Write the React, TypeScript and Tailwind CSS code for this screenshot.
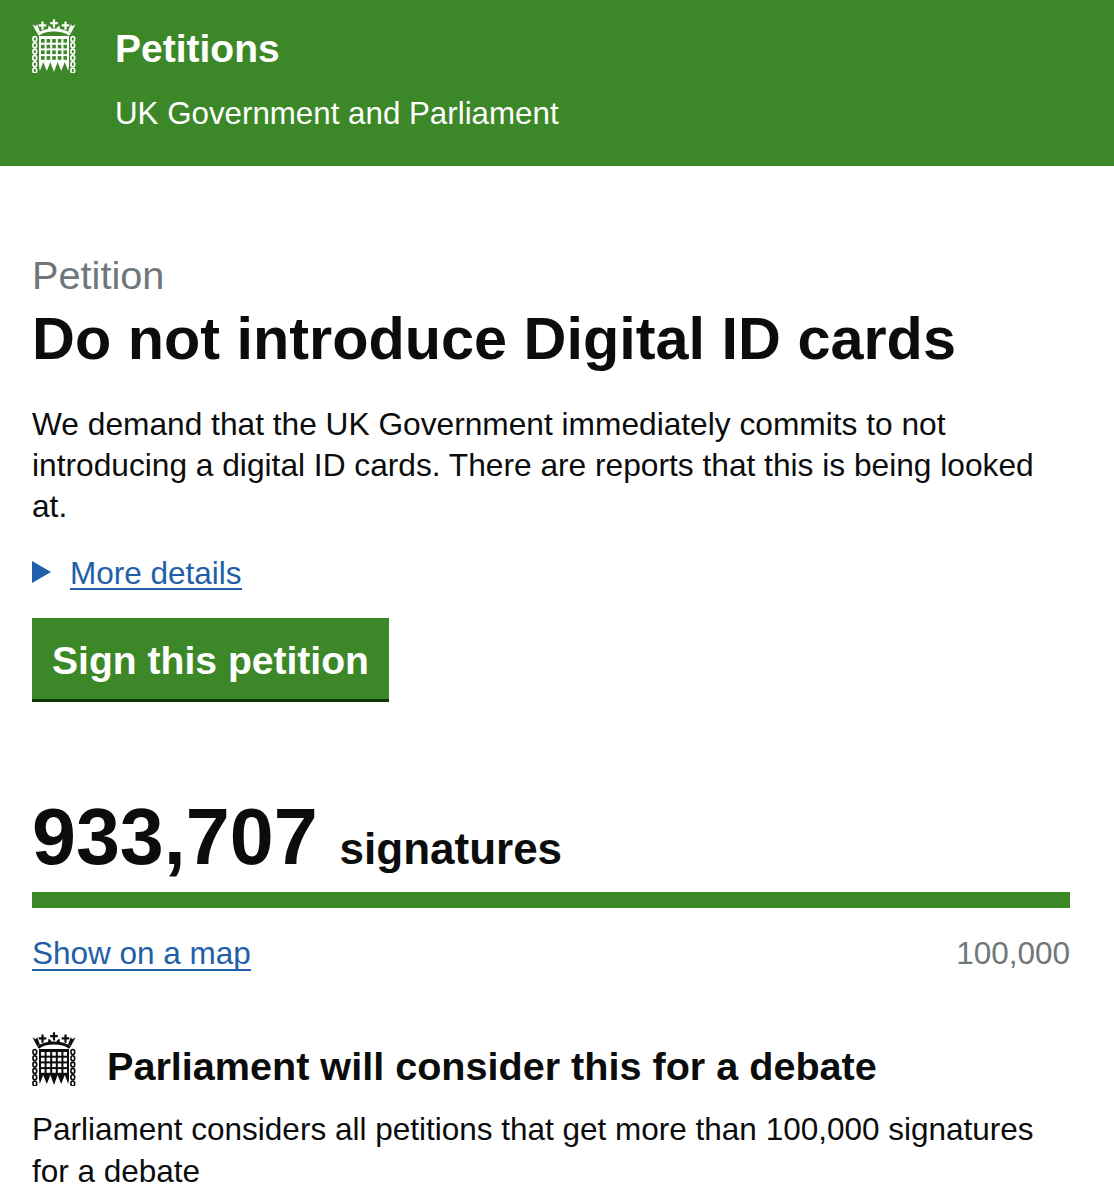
const font = "font-['Liberation_Sans',Arial,sans-serif]";

function Cross({ x, y }: { x: number; y: number }) {
  return <path d={`M${x - 1.1} ${y - 4} H${x + 1.1} V${y - 1.3} H${x + 3.8} V${y + 1} H${x + 1.1} V${y + 4.2} H${x - 1.1} V${y + 1} H${x - 3.8} V${y - 1.3} H${x - 1.1} Z`} />;
}

function Portcullis({ className }: { className: string }) {
  const holes = [];
  for (let r = 0; r < 4; r++) {
    for (let c = 0; c < 5; c++) {
      holes.push(<rect key={`${r}-${c}`} x={9 + c * 5.6} y={20 + r * 5.7} width="3.6" height="3.7" fill="var(--gap)" />);
    }
  }
  const links = [];
  for (let i = 0; i < 6; i++) {
    links.push(<ellipse key={`l${i}`} cx="2.8" cy={20 + i * 6.3} rx="1.9" ry="2.5" fill="none" stroke="currentColor" strokeWidth="1.6" />);
    links.push(<ellipse key={`r${i}`} cx="40.8" cy={20 + i * 6.3} rx="1.9" ry="2.5" fill="none" stroke="currentColor" strokeWidth="1.6" />);
  }
  return (
    <svg viewBox="0 0 44 54" className={className} fill="currentColor">
      {/* crown */}
      <Cross x={22} y={4.2} />
      <Cross x={10.5} y={6.5} />
      <Cross x={33.5} y={6.5} />
      <path d="M0.5 5.5 L4 7.2 L5 5 L8 12.5 L5 14 Z M43.5 5.5 L40 7.2 L39 5 L36 12.5 L39 14 Z" />
      <path d="M16 11 L16.5 6.5 L19 8.5 L20 11 Z M28 11 L27.5 6.5 L25 8.5 L24 11 Z" />
      <path d="M6 15.5 C14 9.5 30 9.5 38 15.5" fill="none" stroke="currentColor" strokeWidth="3" />
      {/* grille */}
      <path d="M7 17 H37 V47 L36.2 52 L32.8 43 L29.2 52 L25.6 43 L22 53 L18.4 43 L14.8 52 L11.2 43 L7.8 52 L7 47 Z" />
      {holes}
      {links}
    </svg>
  );
}

export default function App() {
  return (
    <div className={`${font} w-[1114px] h-[1200px] overflow-hidden bg-white text-[#0b0c0c]`}>
      <header className="h-[166px] bg-[#3c8727] text-white flex pl-[32px] pt-[19px]">
        <Portcullis className="w-[44px] h-[54px] shrink-0 [--gap:#3c8727]" />
        <div className="ml-[39px]">
          <div className="text-[39px] leading-[44px] font-bold mt-[8px]">Petitions</div>
          <div className="text-[31.3px] leading-[36px] mt-[25px]">UK Government and Parliament</div>
        </div>
      </header>

      <main className="px-[32px]">
        <div className="text-[39.7px] leading-[42px] text-[#6f777b] mt-[88px]">Petition</div>
        <h1 className="text-[59.4px] leading-[64px] font-bold mt-[11px]">Do not introduce Digital ID cards</h1>
        <p className="text-[31.7px] leading-[41px] mt-[33px] w-[1038px]">
          We demand that the UK Government immediately commits to not introducing a digital ID cards. There are reports that this is being looked at.
        </p>

        <div className="flex items-center mt-[27px] h-[41px]">
          <svg viewBox="0 0 19 22" className="w-[19px] h-[22px] mb-[6px] text-[#2160a8]" fill="currentColor">
            <path d="M0 0 L19 11 L0 22 Z" />
          </svg>
          <a className="ml-[19px] mb-[2px] text-[31.5px] leading-[30px] text-[#2160a8] border-b-[2px] border-[#2160a8]">More details</a>
        </div>

        <button className="block mt-[23px] w-[357px] h-[84px] pt-[6px] bg-[#3c8727] border-b-[3px] border-[#0f3a05] text-white text-[39.1px] font-bold text-center">
          Sign this petition
        </button>

        <div className="flex items-baseline mt-[96px] h-[78px]">
          <span className="text-[79px] leading-[78px] font-bold">933,707</span>
          <span className="text-[44px] font-bold ml-[22px]">signatures</span>
        </div>

        <div className="h-[16px] bg-[#3c8727] mt-[16px] w-[1038px]" />

        <div className="flex justify-between items-center mt-[26px] h-[40px] w-[1038px]">
          <a className="text-[31.5px] leading-[31px] text-[#2160a8] border-b-[2px] border-[#2160a8]">Show on a map</a>
          <span className="text-[31.5px] text-[#6f777b]">100,000</span>
        </div>

        <div className="flex items-start mt-[58px] h-[60px]">
          <Portcullis className="w-[44px] h-[54px] shrink-0 text-[#0b0c0c] [--gap:#ffffff]" />
          <h2 className="text-[39.6px] leading-[46px] font-bold ml-[31px] mt-[11px]">Parliament will consider this for a debate</h2>
        </div>
        <p className="text-[31.5px] leading-[42px] mt-[16px] w-[1040px]">
          Parliament considers all petitions that get more than 100,000 signatures for a debate
        </p>
      </main>
    </div>
  );
}
